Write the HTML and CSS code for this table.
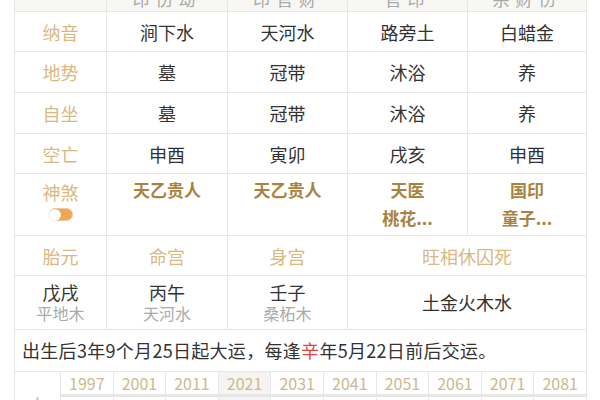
FILE: index.html
```html
<!DOCTYPE html>
<html lang="zh">
<head>
<meta charset="utf-8">
<link rel="stylesheet" href="styles.css">
</head>
<body>
<div class="chart">
  <div class="grid">
    <div class="cell head"></div>
    <div class="cell head">印伤劫</div>
    <div class="cell head">印官财</div>
    <div class="cell head">官印</div>
    <div class="cell head">杀财伤</div>

    <div class="cell label r1">纳音</div>
    <div class="cell val r1">涧下水</div>
    <div class="cell val r1">天河水</div>
    <div class="cell val r1">路旁土</div>
    <div class="cell val r1">白蜡金</div>

    <div class="cell label r2">地势</div>
    <div class="cell val r2">墓</div>
    <div class="cell val r2">冠带</div>
    <div class="cell val r2">沐浴</div>
    <div class="cell val r2">养</div>

    <div class="cell label r2">自坐</div>
    <div class="cell val r2">墓</div>
    <div class="cell val r2">冠带</div>
    <div class="cell val r2">沐浴</div>
    <div class="cell val r2">养</div>

    <div class="cell label r1">空亡</div>
    <div class="cell val r1">申酉</div>
    <div class="cell val r1">寅卯</div>
    <div class="cell val r1">戌亥</div>
    <div class="cell val r1">申酉</div>

    <div class="cell label shen">
      <span>神煞</span>
      <span class="toggle"><span class="knob"></span></span>
    </div>
    <div class="cell star"><span>天乙贵人</span></div>
    <div class="cell star"><span>天乙贵人</span></div>
    <div class="cell star"><span>天医</span><span>桃花...</span></div>
    <div class="cell star"><span>国印</span><span>童子...</span></div>

    <div class="cell label r1">胎元</div>
    <div class="cell label r1">命宫</div>
    <div class="cell label r1">身宫</div>
    <div class="cell label r1 span2">旺相休囚死</div>

    <div class="cell pair"><span class="main">戊戌</span><span class="sub">平地木</span></div>
    <div class="cell pair"><span class="main">丙午</span><span class="sub">天河水</span></div>
    <div class="cell pair"><span class="main">壬子</span><span class="sub">桑柘木</span></div>
    <div class="cell pair span2"><span class="main">土金火木水</span></div>

    <div class="cell note">出生后3年9个月25日起大运，每逢<span class="red">辛</span>年5月22日前后交运。</div>
  </div>

  <div class="years">
    <div class="ycell side">大<br>运</div>
    <div class="ycell yr">1997</div>
    <div class="ycell yr">2001</div>
    <div class="ycell yr">2011</div>
    <div class="ycell yr cur">2021</div>
    <div class="ycell yr">2031</div>
    <div class="ycell yr">2041</div>
    <div class="ycell yr">2051</div>
    <div class="ycell yr">2061</div>
    <div class="ycell yr">2071</div>
    <div class="ycell yr">2081</div>
    <div class="ycell age">1岁</div>
    <div class="ycell age">5岁</div>
    <div class="ycell age">15岁</div>
    <div class="ycell age cur">25岁</div>
    <div class="ycell age">35岁</div>
    <div class="ycell age">45岁</div>
    <div class="ycell age">55岁</div>
    <div class="ycell age">65岁</div>
    <div class="ycell age">75岁</div>
    <div class="ycell age">85岁</div>
  </div>
</div>
</body>
</html>
```

FILE: styles.css
```css
* { box-sizing: border-box; }

html, body {
  margin: 0;
  padding: 0;
  background: #ffffff;
}

body {
  font-family: "Noto Sans CJK SC", "Noto Sans", sans-serif;
  color: #333333;
  overflow: hidden;
}

.chart {
  width: 573px;
  margin: -29px 0 0 14px;
  background: #e7e7e7;
  padding: 1px;
  display: flex;
  flex-direction: column;
  gap: 1px;
}

.grid {
  display: grid;
  grid-template-columns: 91px 120px 119px 119px 118px;
  gap: 1px;
}

.cell {
  background: #ffffff;
  display: flex;
  flex-direction: column;
  align-items: center;
  justify-content: center;
  font-size: 18px;
  line-height: 22px;
}

.head {
  height: 39px;
  background: #f8f7f4;
  justify-content: flex-end;
  padding-bottom: 1px;
  color: #a8a8a8;
  font-size: 17px;
  letter-spacing: 6px;
}

.r1 { height: 39px; }
.r2 { height: 40px; }

.label { color: #d9b983; }

.val { color: #333333; }

.shen {
  height: 61px;
  justify-content: flex-start;
  padding-top: 8px;
}

.shen span:first-child { line-height: 20px; }

.toggle {
  margin-top: 6px;
  width: 24px;
  height: 13px;
  border-radius: 7px;
  background: #f0a850;
  border: 1px solid #eec79a;
  display: flex;
  align-items: center;
}

.knob {
  width: 12px;
  height: 12px;
  border-radius: 50%;
  background: #ffffff;
  box-shadow: 0 0 1px rgba(0,0,0,0.25);
  margin-left: -1px;
}

.star {
  height: 61px;
  justify-content: flex-start;
  padding-top: 2px;
  color: #a98341;
  font-weight: 700;
  font-size: 17px;
  line-height: 28px;
}

.span2 { grid-column: span 2; }

.pair {
  height: 53px;
}

.pair .main {
  font-size: 18px;
  line-height: 21px;
  color: #333333;
}

.pair .sub {
  font-size: 16px;
  line-height: 21px;
  color: #aaaaaa;
}

.note {
  grid-column: 1 / -1;
  height: 41px;
  padding-left: 7px;
  display: block;
  line-height: 41px;
  font-size: 18px;
  letter-spacing: 0.3px;
  color: #333333;
}

.red { color: #e0453c; }

.years {
  display: grid;
  grid-template-columns: 45px repeat(10, 1fr);
  gap: 1px;
}

.ycell {
  background: #ffffff;
  display: flex;
  align-items: center;
  justify-content: center;
}

.side {
  grid-row: span 2;
  color: #dcae5f;
  font-size: 18px;
  line-height: 22px;
  text-align: center;
  display: block;
  padding-top: 22px;
}

.yr {
  height: 22px;
  font-size: 16px;
  color: #d0b88d;
}

.age {
  height: 40px;
  font-size: 14px;
  color: #999999;
}

.cur { background: #f6f4f0; }
```
